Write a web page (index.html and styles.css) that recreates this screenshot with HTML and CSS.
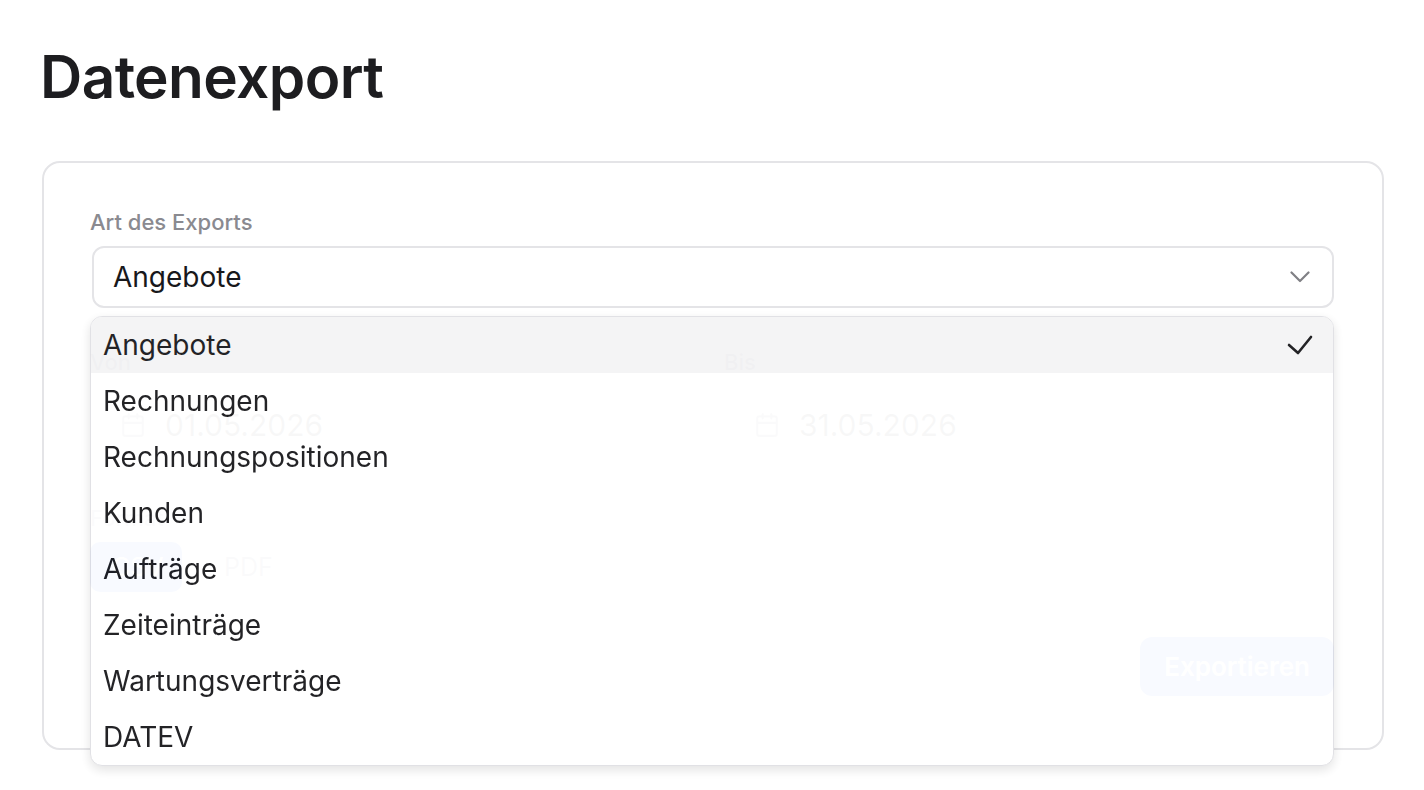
FILE: index.html
```html
<!doctype html>
<html lang="de">
<head>
<meta charset="UTF-8">
<title>Datenexport</title>
<link rel="stylesheet" href="styles.css">
</head>
<body>
<div class="page">
	<h1>Datenexport</h1>
	<div class="card">
		<div class="field">
			<label class="field_label">Art des Exports</label>
			<div class="select_wrap">
				<div class="select">
					<span>Angebote</span>
					<svg class="chevron" width="20" height="12" viewBox="0 0 20 12"><polyline points="1.5,1.5 10,10 18.5,1.5" fill="none" stroke="#808085" stroke-width="2.2" stroke-linecap="round" stroke-linejoin="round"/></svg>
				</div>
				<!-- geöffnete Auswahlliste -->
				<ul class="menu">
					<li class="current">Angebote
						<svg class="check" width="26" height="22" viewBox="0 0 26 22"><polyline points="2,11 11,19 24,3" fill="none" stroke="#1c1c1f" stroke-width="2.6" stroke-linecap="round" stroke-linejoin="round"/></svg>
					</li>
					<li>Rechnungen</li>
					<li>Rechnungspositionen</li>
					<li>Kunden</li>
					<li>Aufträge</li>
					<li>Zeiteinträge</li>
					<li>Wartungsverträge</li>
					<li>DATEV</li>
				</ul>
			</div>
		</div>
		<div class="dates">
			<div class="field">
				<label class="field_label">Von</label>
				<div class="date_input">
					<svg width="26" height="26" viewBox="0 0 24 24" fill="none" stroke="#71717a" stroke-width="2" stroke-linecap="round"><rect x="3" y="4" width="18" height="18" rx="2"/><line x1="16" y1="2" x2="16" y2="6"/><line x1="8" y1="2" x2="8" y2="6"/><line x1="3" y1="10" x2="21" y2="10"/></svg>
					<span>01.05.2026</span>
				</div>
			</div>
			<div class="field">
				<label class="field_label">Bis</label>
				<div class="date_input">
					<svg width="26" height="26" viewBox="0 0 24 24" fill="none" stroke="#71717a" stroke-width="2" stroke-linecap="round"><rect x="3" y="4" width="18" height="18" rx="2"/><line x1="16" y1="2" x2="16" y2="6"/><line x1="8" y1="2" x2="8" y2="6"/><line x1="3" y1="10" x2="21" y2="10"/></svg>
					<span>31.05.2026</span>
				</div>
			</div>
		</div>
		<div class="field format">
			<label class="field_label">Format</label>
			<div class="toggle">
				<button class="on">CSV</button>
				<button>PDF</button>
			</div>
		</div>
		<div class="actions">
			<button class="btn_export">Exportieren</button>
		</div>
	</div>
</div>
</body>
</html>
```

FILE: styles.css
```css
* {box-sizing: border-box;}
html,body {min-height: 100%;}
body {margin: 0;background: #fff;color: #18181b;font-family: Inter, "Noto Sans", sans-serif;}
.page {min-height: 790px;padding: 40px 40px 0 42px;}
h1 {margin: 0 0 47px -2px;font-size: 58.5px;line-height: 74px;font-weight: 600;letter-spacing: -0.6px;color: #1d1d20;}

.card {border: 2px solid #e4e4e7;border-radius: 18px;padding: 45px 48px 52px 46px;}
.field_label {display: block;font-size: 22px;line-height: 28px;font-weight: 500;color: #8a8a90;margin-bottom: 10px;}

/* Auswahl */
.select_wrap {position: relative;}
.select {display: flex;align-items: center;justify-content: space-between;height: 62px;margin-left: 2px;padding: 0 22px 0 19px;border: 2px solid #e4e4e7;border-radius: 12px;font-size: 28px;}
.menu {position: absolute;top: 70px;left: 0;right: 0;margin: 0;padding: 0;list-style: none;background: #fff;border: 1px solid #e1e1e5;border-radius: 12px;box-shadow: 0 4px 12px rgba(0,0,0,0.12);opacity: 0.97;z-index: 5;overflow: hidden;}
.menu li {display: flex;align-items: center;justify-content: space-between;height: 56px;padding: 0 20px 0 12px;font-size: 28px;color: #1c1c1f;}
.menu li.current {background: #f4f4f5;}

/* Zeitraum */
.dates {display: grid;grid-template-columns: 1fr 1fr;gap: 24px;margin-top: 40px;}
.dates .field_label {margin-bottom: 15px;}
.date_input {display: flex;align-items: center;gap: 19px;height: 68px;padding: 0 28px;border: 2px solid #e4e4e7;border-radius: 12px;font-size: 30px;color: #18181b;}

/* Format */
.format {margin-top: 45px;}
.toggle {display: flex;gap: 20px;}
.toggle button {height: 50px;padding: 0 22px;border: 0 none;border-radius: 10px;background: none;font-family: inherit;font-size: 25px;color: #71717a;}
.toggle button.on {background: #2563eb;color: #fff;width: 92px;}

.actions {display: flex;justify-content: flex-end;margin-top: 45px;}
.btn_export {height: 59px;padding: 0 24px;border: 0 none;border-radius: 12px;background: #2563eb;color: #fff;font-family: inherit;font-size: 26px;font-weight: 600;}
```
